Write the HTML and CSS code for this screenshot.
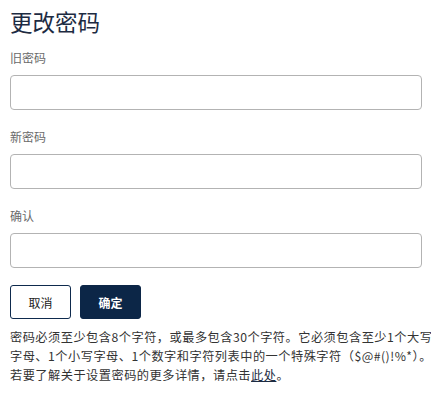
FILE: index.html
```html
<!DOCTYPE html>
<html lang="zh">
<head>
<meta charset="utf-8">
<link rel="stylesheet" href="styles.css">
</head>
<body>
<main class="page">
  <h1 class="title">更改密码</h1>
  <div class="field">
    <label class="label">旧密码</label>
    <input class="input" type="password">
  </div>
  <div class="field">
    <label class="label">新密码</label>
    <input class="input" type="password">
  </div>
  <div class="field">
    <label class="label">确认</label>
    <input class="input" type="password">
  </div>
  <div class="actions">
    <button class="btn btn-cancel">取消</button>
    <button class="btn btn-ok">确定</button>
  </div>
  <p class="note">密码必须至少包含8个字符，或最多包含30个字符。它必须包含至少1个大写<br>字母、1个小写字母、1个数字和字符列表中的一个特殊字符（$@#()!%*）。<br>若要了解关于设置密码的更多详情，请点击<a class="link" href="#">此处</a>。</p>
</main>
</body>
</html>
```

FILE: styles.css
```css
html, body {
  margin: 0;
  padding: 0;
  background: #fff;
}
body {
  font-family: "Noto Sans CJK SC", "Noto Sans", sans-serif;
  color: #333;
}
.page {
  padding: 5px 9px 0 10px;
  display: flex;
  flex-direction: column;
}
.title {
  margin: 0 0 12px 0;
  font-size: 22.5px;
  line-height: 32px;
  font-weight: 400;
  color: #1d2b42;
}
.field {
  display: flex;
  flex-direction: column;
  gap: 8px;
  margin-bottom: 18px;
}
.label {
  font-size: 12px;
  line-height: 18px;
  color: #6a6a6a;
}
.input {
  box-sizing: border-box;
  width: 100%;
  height: 35px;
  margin: 0;
  border: 1px solid #b3b3b3;
  border-radius: 4px;
  background: #fff;
  outline: none;
}
.actions {
  display: flex;
  gap: 9px;
  margin-top: -1px;
}
.btn {
  box-sizing: border-box;
  width: 61px;
  height: 34px;
  border-radius: 3px;
  font-family: inherit;
  font-size: 12px;
  padding: 0;
  cursor: pointer;
}
.btn-cancel {
  background: #fff;
  border: 1px solid #0e2a4d;
  color: #222;
}
.btn-ok {
  background: #0c2647;
  border: 1px solid #0c2647;
  color: #fff;
  font-weight: 700;
}
.note {
  margin: 9px 0 0 0;
  font-size: 12.2px;
  letter-spacing: 0.5px;
  line-height: 19px;
  white-space: nowrap;
  color: #333;
}
.link {
  color: #1d2b42;
  text-decoration: underline;
}
```
